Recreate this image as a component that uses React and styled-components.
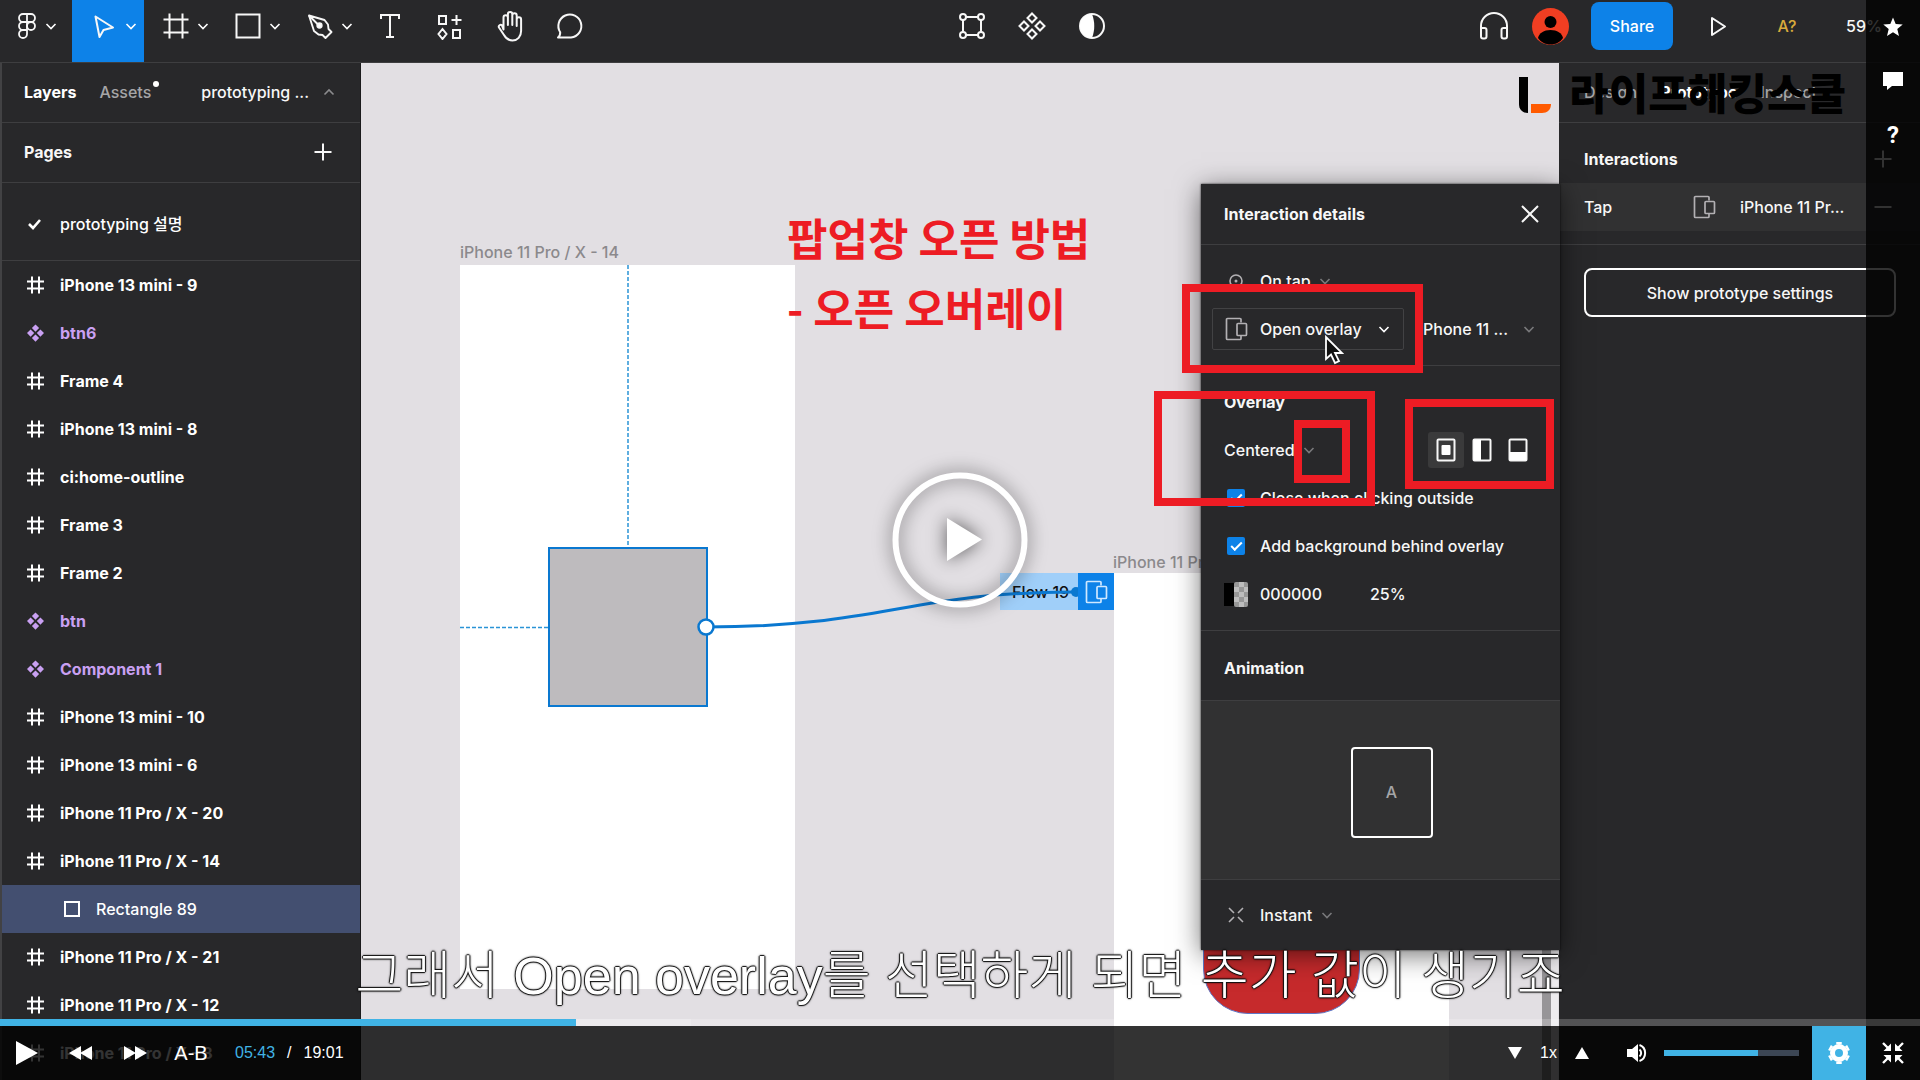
import React from "react";
import styled, { createGlobalStyle, css } from "styled-components";

const c = {
  panel: "#28282a",
  raised: "#313132",
  line: "#3e3e40",
  canvas: "#e2dfe3",
  blue: "#0d82e8",
  wire: "#0a78d0",
  sky: "#40b3e5",
  purple: "#c9a0f2",
  red: "#ed1c24",
  text: "#f7f7f7",
  dim: "#a5a5a7",
};

const Global = createGlobalStyle`
  *, *::before, *::after { box-sizing: border-box; }
  body { margin: 0; background: #000; }
  button, select, input { font: inherit; color: inherit; margin: 0; }
  button { padding: 0; border: 0; background: none; cursor: pointer; }
  svg { display: block; flex: none; }
  ul, h2, h3, p { margin: 0; padding: 0; font-size: inherit; list-style: none; }
`;

/* ---------- player shell ---------- */
const Player = styled.main`
  display: grid;
  grid-template: minmax(0, 1fr) / minmax(0, 1fr);
  height: 100vh;
  overflow: hidden;
  font-family: Inter, "Noto Sans CJK KR", sans-serif;
  font-size: 16px;
  font-weight: 500;
  line-height: 24px;
  color: ${c.text};
  & > * { grid-area: 1 / 1; }
`;

const Screen = styled.div`
  display: flex;
  flex-direction: column;
  min-height: 0;
  background: ${c.panel};
`;

/* ---------- toolbar ---------- */
const Toolbar = styled.header`
  display: flex;
  flex: none;
  height: 63px;
  border-bottom: 1px solid ${c.line};
`;
const ToolGroup = styled.div`
  display: flex;
  justify-content: center;
  flex: ${(p) => (p.$grow ? 1 : "none")};
`;
const Tool = styled.button`
  display: flex;
  align-items: center;
  justify-content: ${(p) => (p.$menu ? "flex-start" : "center")};
  gap: ${(p) => (p.$tight ? 4 : 7)}px;
  width: ${(p) => (p.$menu ? 72 : 60)}px;
  padding: 0 0 10px ${(p) => (p.$menu ? (p.$tight ? 13 : 18) : 0)}px;
  background: ${(p) => (p.$active ? c.blue : "transparent")};
`;
const Account = styled.div`
  display: grid;
  grid-template-columns: 60px 52px 112px 60px 78px 94px;
  place-items: center;
  padding-bottom: 10px;
`;
const Share = styled.button`
  width: 82px;
  height: 48px;
  border-radius: 8px;
  background: ${c.blue};
  color: #fff;
`;
const Missing = styled.button`
  color: #d8ab3c;
`;
const ZoomLevel = styled.button`
  justify-self: start;
  margin-left: 20px;
`;

/* ---------- layout under the toolbar ---------- */
const Body = styled.div`
  position: relative;
  display: flex;
  flex: 1;
  min-height: 0;
`;
const Side = styled.aside`
  flex: none;
  width: 361px;
  overflow: hidden;
  background: ${c.panel};
  ${(p) => p.$left && css`border-left: 2px solid #424244; border-right: 1px solid #1b1b1c;`}
`;
const Bar = styled.div`
  display: flex;
  align-items: center;
  gap: ${(p) => p.$gap || 23}px;
  height: 60px;
  padding: 0 25px 2px ${(p) => (p.$right ? 25 : 22)}px;
  border-bottom: 1px solid ${c.line};
`;
const Tab = styled.button`
  position: relative;
  color: ${(p) => (p.$on ? "#fff" : c.dim)};
  font-weight: ${(p) => (p.$on ? 700 : 500)};
`;
const Dot = styled.span`
  position: absolute;
  top: 1px;
  right: -8px;
  width: 6px;
  height: 6px;
  border-radius: 50%;
  background: #fff;
`;
const PageSwitch = styled.button`
  display: flex;
  align-items: center;
  gap: 14px;
  margin-left: auto;
`;
const Heading = styled.h2`
  flex: 1;
  font-weight: 700;
`;
const Pages = styled.ul`
  padding: 17px 0 12px;
  border-bottom: 1px solid ${c.line};
`;
const Row = styled.li`
  display: flex;
  align-items: center;
  gap: 14px;
  height: 48px;
  padding-left: ${(p) => (p.$nested ? 58 : 22)}px;
  background: ${(p) => (p.$selected ? "#434f70" : "transparent")};
  color: ${(p) => (p.$component ? c.purple : "#fff")};
  font-weight: ${(p) => (p.$plain ? 500 : 700)};
`;

/* ---------- canvas ---------- */
const Canvas = styled.section`
  position: relative;
  flex: 1;
  min-width: 0;
  overflow: hidden;
  background: ${c.canvas};
`;
const place = css`
  position: absolute;
  left: ${(p) => p.$x}px;
  top: ${(p) => p.$y}px;
  width: ${(p) => (p.$w ? p.$w + "px" : "auto")};
  height: ${(p) => (p.$h ? p.$h + "px" : "auto")};
`;
const Artboard = styled.div`${place} background: #fff;`;
const ArtLabel = styled.span`${place} color: #8b898c; white-space: nowrap;`;
const Shape = styled.div`${place} background: #bebbbe; border: 2px solid ${c.wire};`;
const RedPill = styled.div`
  ${place}
  background: #c62a2c;
  border: 1px solid #5f78c8;
  border-radius: 45px;
`;
const FlowTag = styled.div`
  ${place}
  display: flex;
  align-items: center;
  padding-left: 12px;
  background: #a0cff9;
  color: #111;
`;
const FlowTarget = styled.div`
  ${place}
  display: grid;
  place-items: center;
  background: ${c.blue};
`;
const Wires = styled.svg`
  position: absolute;
  inset: 0;
  width: 100%;
  height: 100%;
`;
const ScrollTrack = styled.div`
  position: absolute;
  top: 85%;
  bottom: 0;
  right: 1px;
  width: 16px;
  border-left: 9px solid #979598;
  background: #eeecef;
`;

/* ---------- interaction dialog ---------- */
const Dialog = styled.section`
  position: absolute;
  top: 121px;
  right: 360px;
  width: 359px;
  background: ${c.panel};
  box-shadow: 0 5px 25px rgba(0, 0, 0, 0.55), 0 0 2px rgba(0, 0, 0, 0.8);
`;
const DialogHead = styled.header`
  display: flex;
  align-items: center;
  height: 61px;
  padding: 0 20px 0 23px;
  border-bottom: 1px solid ${c.line};
`;
const Section = styled.div`
  padding: 12px 0;
  border-bottom: 1px solid ${c.line};
`;
const Line = styled.div`
  display: flex;
  align-items: center;
  height: 48px;
  padding: 0 20px 0 23px;
  gap: 12px;
`;
const IconSlot = styled.span`
  display: grid;
  place-items: center;
  flex: none;
  width: 24px;
  height: 24px;
`;
const Drop = styled.label`
  display: flex;
  align-items: center;
  gap: ${(p) => p.$gap || 8}px;
`;
const Select = styled.select`
  appearance: none;
  border: 0;
  padding: 0;
  background: transparent;
  color: ${c.text};
  outline: 0;
`;
const ActionRow = styled(Line)`
  padding: 0 25px 0 11px;
  justify-content: space-between;
`;
const ActionBox = styled.div`
  display: flex;
  align-items: center;
  gap: 12px;
  width: 192px;
  height: 42px;
  padding-left: 11px;
  border: 1px solid #424244;
  border-radius: 2px;
`;
const AlignGroup = styled.div`
  display: flex;
  margin-left: auto;
  padding-right: 4px;
`;
const AlignButton = styled.button`
  display: grid;
  place-items: center;
  width: 36px;
  height: 36px;
  border-radius: 3px;
  background: ${(p) => (p.$on ? "#3a3a3b" : "transparent")};
`;
const CheckLine = styled.label`
  display: flex;
  align-items: center;
  gap: 15px;
  height: 48px;
  padding-left: 26px;
`;
const Check = styled.input`
  appearance: none;
  display: grid;
  place-items: center;
  width: 18px;
  height: 18px;
  border-radius: 2px;
  background: ${c.blue};
  &:checked::after {
    content: "";
    width: 11px;
    height: 6px;
    border: solid #fff;
    border-width: 0 0 2px 2px;
    transform: translateY(-1px) rotate(-45deg);
  }
`;
const Swatch = styled.span`
  display: flex;
  width: 24px;
  height: 25px;
  align-items: center;
  &::before {
    content: "";
    width: 10px;
    height: 23px;
    background: #000;
  }
  &::after {
    content: "";
    width: 14px;
    height: 25px;
    border-radius: 2px;
    background: repeating-conic-gradient(#bdbdbd 0 25%, #979797 0 50%) 0 0 / 10px 10px;
  }
`;
const ValueInput = styled.input`
  width: ${(p) => p.$w}px;
  padding: 0;
  border: 0;
  background: transparent;
  outline: 0;
`;
const AnimTitle = styled.h3`
  height: 70px;
  padding: 0 23px;
  border-bottom: 1px solid ${c.line};
  font-weight: 700;
  line-height: 74px;
`;
const Preview = styled.div`
  display: grid;
  place-items: center;
  height: 179px;
  padding: 4px 0 0 22px;
  background: ${c.raised};
  border-bottom: 1px solid ${c.line};
`;
const PreviewCard = styled.div`
  display: grid;
  place-items: center;
  width: 82px;
  height: 91px;
  border: 2px solid #fff;
  border-radius: 4px;
  color: ${c.dim};
`;
const InstantLine = styled(Line)`
  height: 70px;
`;

/* ---------- prototype panel ---------- */
const ProtoSection = styled.div`
  padding: 12px 0 13px;
  border-bottom: 1px solid ${c.line};
`;
const ProtoRow = styled.div`
  display: flex;
  align-items: center;
  height: 48px;
  padding: 0 25px;
  background: ${(p) => (p.$lit ? c.raised : "transparent")};
`;
const Trigger = styled.span`
  width: 108px;
`;
const Target = styled.span`
  flex: 1;
  padding-left: 24px;
`;
const Settings = styled.button`
  display: block;
  width: calc(100% - 49px);
  height: 49px;
  margin: 23px 24px 0 25px;
  border: 2px solid #fff;
  border-radius: 8px;
`;

/* ---------- video overlays ---------- */
const Marks = styled.div`
  position: relative;
  pointer-events: none;
`;
const Frame = styled.div`${place} border: 8px solid ${c.red};`;
const Note = styled.p`
  ${place}
  color: ${c.red};
  font: 700 44px/70px "Noto Sans CJK KR", sans-serif;
  white-space: pre-line;
`;
const Pointer = styled.svg`${place}`;
const Watermark = styled.div`
  position: absolute;
  top: 61px;
  right: 74px;
  display: flex;
  align-items: center;
  gap: 18px;
  color: #000;
  font: 900 43px/60px "Noto Sans CJK KR", sans-serif;
`;
const Chrome = styled.div`
  display: grid;
  grid-template: minmax(0, 1fr) 7px 54px / minmax(0, 1fr) 54px;
  z-index: 2;
`;
const Stage = styled.div`
  position: relative;
  display: grid;
  grid-area: 1 / 1 / 2 / 3;
  place-items: end center;
`;
const BigPlay = styled.button`
  position: absolute;
  left: 50%;
  top: 50vh;
  transform: translate(-50%, -50%);
  display: grid;
  filter: drop-shadow(0 0 9px rgba(0, 0, 0, 0.6));
`;
const Caption = styled.p`
  padding-bottom: 9px;
  color: #fff;
  font: 300 52px/68px "Liberation Sans", "Noto Sans CJK KR", sans-serif;
  white-space: nowrap;
  text-shadow: 1px 0 1px #111, -1px 0 1px #111, 0 1px 1px #111, 0 -1px 1px #111,
    0 0 3px rgba(0, 0, 0, 0.7);
`;
const Rail = styled.nav`
  grid-area: 1 / 2 / 3 / 3;
  display: flex;
  flex-direction: column;
  background: rgba(0, 0, 0, 0.8);
  z-index: 1;
`;
const RailButton = styled.button`
  display: grid;
  place-items: center;
  height: 54px;
  color: #fff;
  font: 700 24px/28px Roboto, sans-serif;
`;
const Range = styled.input`
  appearance: none;
  display: block;
  width: 100%;
  height: ${(p) => p.$h}px;
  background: ${(p) => p.$fill};
  &::-webkit-slider-thumb { appearance: none; width: 0; height: 0; }
`;
const Seek = styled.div`
  grid-area: 2 / 1 / 3 / 3;
  z-index: 2;
`;
const Controls = styled.div`
  grid-area: 3 / 1 / 4 / 3;
  display: flex;
  align-items: center;
  background: rgba(0, 0, 0, 0.8);
  color: #fff;
  font-family: "Liberation Sans", Arial, sans-serif;
`;
const Ctl = styled.button`
  display: grid;
  place-items: center;
  width: ${(p) => p.$w || 54}px;
  height: 54px;
  background: ${(p) => (p.$on ? c.sky : "transparent")};
  font-size: 20px;
`;
const Time = styled.div`
  display: flex;
  gap: 12px;
  padding-left: 15px;
`;
const Now = styled.span`
  color: ${c.sky};
`;
const Right = styled.div`
  display: flex;
  align-items: center;
  margin-left: auto;
`;
const Speed = styled.div`
  display: flex;
  align-items: center;
  margin-right: 8px;
`;
const Rate = styled.span`
  width: 27px;
  text-align: center;
`;
const VolumeBox = styled.div`
  width: 135px;
  margin: 0 13px 0 0;
`;

/* ---------- drawings ---------- */
const Svg = ({ w = 28, h = w, box = `0 0 ${w} ${h}`, sw = 2, color = "currentColor", children, ...r }) => (
  <svg width={w} height={h} viewBox={box} fill="none" stroke={color} strokeWidth={sw} aria-hidden="true" {...r}>
    {children}
  </svg>
);
const Chev = ({ color = "#fff", up }) => (
  <Svg w={12} color={color} sw={1.6}>
    <path d={up ? "M1.500 8.500 6 4l4.500 4.500" : "M1.500 4 6 8.500 10.500 4"} />
  </Svg>
);
const Figma = () => (
  <Svg sw={1.8}>
    <path d="M14 2h-4a4 4 0 0 0 0 8h4zM14 2h4a4 4 0 0 1 0 8h-4zM14 10h-4a4 4 0 0 0 0 8h4zM14 18h-4a4 4 0 1 0 4 4z" />
    <circle cx="18" cy="14" r="4" />
  </Svg>
);
const Move = () => (
  <Svg sw={2}><path d="M5.500 4.500 23 15.500l-9.500 2.500-4 7z" strokeLinejoin="round" /></Svg>
);
const Hash = () => (
  <Svg><path d="M7.500 1.500v25M20.500 1.500v25M1.500 7.500h25M1.500 20.500h25" /></Svg>
);
const SmallHash = () => (
  <Svg w={22} sw={2}><path d="M8 2.500v17M15 2.500v17M3 7.500h17M3 14.500h17" /></Svg>
);
const Diamonds = () => (
  <Svg w={22} color="none"><path fill={c.purple} d="m11.500 2.500 3.600 3.600-3.600 3.600-3.600-3.600zm0 10 3.600 3.600-3.600 3.600-3.600-3.600zM6.600 7.500l3.600 3.600-3.600 3.600-3.600-3.600zm9.800 0 3.600 3.600-3.600 3.600-3.600-3.600z" /></Svg>
);
const Pen = () => (
  <Svg sw={1.9} strokeLinejoin="round">
    <path d="M3 3.500 8 19l4.500 3.500 4 0.500 3 3 6-6-3-3-.5-4.500L18.500 8z" />
    <path d="m3 3.500 9 9" /><circle cx="13.500" cy="13.500" r="2.200" fill="#fff" />
  </Svg>
);
const TextTool = () => (
  <Svg><path d="M5 7V3h18v4M14 3v22M10 25h8" /></Svg>
);
const Resources = () => (
  <Svg w={30} h={28}><path d="M4 4h7v8H4zM18 18h7v8h-7zM7.500 17l4 5-4 5-4-5zM21.500 3v10M16.500 8h10" /></Svg>
);
const Hand = () => (
  <Svg w={32} sw={2} strokeLinejoin="round" strokeLinecap="round">
    <path d="M9.500 19.500V7.500a2.200 2.200 0 0 1 4.400 0V15 4.200a2.200 2.200 0 0 1 4.400 0V15 5.500a2.200 2.200 0 0 1 4.400 0V16 9.500a2.200 2.200 0 0 1 4.400 0V21c0 5.500-3.600 9.500-8.600 9.500-4.500 0-6.500-2-8.500-5.500l-5-7.500c-1-1.800 1.500-3.600 3-2.200z" />
  </Svg>
);
const Comment = () => (
  <Svg w={30} h={28}><path d="M3 25.500c2-1.500 2.300-3.200 2.200-5.200A11.500 11.500 0 1 1 16 25.500z" strokeLinejoin="round" /></Svg>
);
const EditObject = () => (
  <Svg><path d="M8 5h12M8 23h12M5 8v12M23 8v12" /><circle cx="5" cy="5" r="3" /><circle cx="23" cy="5" r="3" /><circle cx="5" cy="23" r="3" /><circle cx="23" cy="23" r="3" /></Svg>
);
const Component = () => (
  <Svg><path d="m14 1.500 4.500 4.500-4.500 4.500L9.500 6zM14 17.500l4.500 4.500-4.500 4.500L9.500 22zM6 9.500l4.500 4.500L6 18.500 1.500 14zM22 9.500l4.500 4.500-4.500 4.500-4.500-4.500z" /></Svg>
);
const Mask = () => (
  <Svg><circle cx="14" cy="14" r="12" /><path fill="#fff" d="M14 2a12 12 0 0 0 0 24c3-8 3-16 0-24z" stroke="none" /></Svg>
);
const Headphones = () => (
  <Svg w={32}><path d="M3 25V16a13 13 0 0 1 26 0v9M3 18h3.500a2 2 0 0 1 2 2v6.500a2 2 0 0 1-2 2H5a2 2 0 0 1-2-2zM29 18h-3.500a2 2 0 0 0-2 2v6.500a2 2 0 0 0 2 2H27a2 2 0 0 0 2-2z" /></Svg>
);
const Avatar = () => (
  <Svg w={37} color="none"><circle cx="18.500" cy="18.500" r="18.500" fill="#f03e22" /><circle cx="18.500" cy="14" r="6" fill="#000" /><path fill="#000" d="M6 30c1-5 6-8 12.500-8S30 25 31 30c-3 4.500-8 6.500-12.500 6.500S9 34.500 6 30z" /></Svg>
);
const PlayOutline = () => (
  <Svg w={24}><path d="M6 4v17l13-8.500z" strokeLinejoin="round" /></Svg>
);
const OverlayIcon = ({ color = "#b2b0b3" }) => (
  <Svg w={24} sw={1.7} color={color}><path d="M17 5.500V2.500a1 1 0 0 0-1-1H3.500a1 1 0 0 0-1 1v19a1 1 0 0 0 1 1H16a1 1 0 0 0 1-1v-2.500" /><rect x="13" y="6.500" width="9.500" height="12" rx="1" /></Svg>
);
const Plus = () => <Svg w={24}><path d="M12 3.500v17M3.500 12h17" /></Svg>;
const Minus = () => <Svg w={24}><path d="M3.500 12h17" /></Svg>;
const Close = () => <Svg w={20}><path d="m2 2 16 16M18 2 2 18" /></Svg>;
const Tick = () => <Svg w={22} sw={2.6}><path d="m5 11 4 4 7-8" /></Svg>;
const SquareIcon = () => <Svg w={22}><path d="M5 4h14v14H5z" /></Svg>;
const TapIcon = () => <Svg w={16} sw={1.6} color="#b2b0b3"><circle cx="8" cy="8" r="6" /><circle cx="8" cy="8" r="1.500" fill="#b2b0b3" stroke="none" /></Svg>;
const InstantIcon = () => <Svg w={16} sw={1.6} color="#b2b0b3"><path d="m1 1 5 5M15 1l-5 5M1 15l5-5M15 15l-5-5" /></Svg>;
const AlignIcon = ({ kind }) => (
  <Svg w={20} h={24}>
    <rect x="1.500" y="1.500" width="17" height="21" rx="1" />
    {kind === "center" && <rect x="5.500" y="7" width="9" height="10" rx="1" fill="#fff" stroke="none" />}
    {kind === "left" && <path d="M2 2h7v20H2z" fill="#fff" stroke="none" />}
    {kind === "bottom" && <path d="M2 14h16v8H2z" fill="#fff" stroke="none" />}
  </Svg>
);
const Solid = ({ w, h = w, d }) => <Svg w={w} h={h} color="none"><path fill="#fff" d={d} /></Svg>;

const layers = [
  ["iPhone 13 mini - 9"], ["btn6", "component"], ["Frame 4"], ["iPhone 13 mini - 8"],
  ["ci:home-outline"], ["Frame 3"], ["Frame 2"], ["btn", "component"], ["Component 1", "component"],
  ["iPhone 13 mini - 10"], ["iPhone 13 mini - 6"], ["iPhone 11 Pro / X - 20"],
  ["iPhone 11 Pro / X - 14"], ["Rectangle 89", "rect"], ["iPhone 11 Pro / X - 21"],
  ["iPhone 11 Pro / X - 12"], ["iPhone 11 Pro / X - 8"],
];

const Dropdown = ({ label, value, gap, bright }) => (
  <Drop $gap={gap}>
    <Select aria-label={label} defaultValue={value}><option>{value}</option></Select>
    <Chev color={bright ? "#fff" : "#79797b"} />
  </Drop>
);

const LayerIcon = ({ kind }) =>
  kind === "component" ? <Diamonds /> : kind === "rect" ? <SquareIcon /> : <SmallHash />;

const seekFill = `linear-gradient(90deg, ${c.sky} 0 30%, rgba(255,255,255,.35) 30% 36%, rgba(255,255,255,.2) 36%)`;
const volumeFill = `linear-gradient(90deg, ${c.sky} 0 70%, #3c4654 70%)`;

export default function App() {
  return (
    <>
      <Global />
      <Player>
        <Screen>
          <Toolbar>
            <ToolGroup>
              <Tool $menu $tight aria-label="Main menu"><Figma /><Chev /></Tool>
              <Tool $menu $active aria-label="Move"><Move /><Chev /></Tool>
              <Tool $menu aria-label="Frame"><Hash /><Chev /></Tool>
              <Tool $menu aria-label="Rectangle"><Svg><path d="M2.500 2.500h23v23h-23z" /></Svg><Chev /></Tool>
              <Tool $menu aria-label="Pen"><Pen /><Chev /></Tool>
              <Tool aria-label="Text"><TextTool /></Tool>
              <Tool aria-label="Resources"><Resources /></Tool>
              <Tool aria-label="Hand"><Hand /></Tool>
              <Tool aria-label="Comment"><Comment /></Tool>
            </ToolGroup>
            <ToolGroup $grow>
              <Tool aria-label="Edit object"><EditObject /></Tool>
              <Tool aria-label="Create component"><Component /></Tool>
              <Tool aria-label="Use as mask"><Mask /></Tool>
            </ToolGroup>
            <Account>
              <button aria-label="Audio"><Headphones /></button>
              <Avatar />
              <Share>Share</Share>
              <button aria-label="Present"><PlayOutline /></button>
              <Missing>A?</Missing>
              <ZoomLevel>59%</ZoomLevel>
            </Account>
          </Toolbar>

          <Body>
            <Side $left>
              <Bar>
                <Tab $on>Layers</Tab>
                <Tab>Assets<Dot /></Tab>
                <PageSwitch>prototyping ...<Chev up color="#8b8b8d" /></PageSwitch>
              </Bar>
              <Bar>
                <Heading>Pages</Heading>
                <button aria-label="Add page"><Plus /></button>
              </Bar>
              <Pages>
                <Row $plain><Tick />prototyping 설명</Row>
              </Pages>
              <ul>
                {layers.map(([name, kind]) => (
                  <Row key={name} $component={kind === "component"} $nested={kind === "rect"} $selected={kind === "rect"} $plain={kind === "rect"}>
                    <LayerIcon kind={kind} />{name}
                  </Row>
                ))}
              </ul>
            </Side>

            <Canvas>
              <ArtLabel $x={99} $y={177}>iPhone 11 Pro / X - 14</ArtLabel>
              <Artboard $x={99} $y={202} $w={335} $h={724} />
              <ArtLabel $x={752} $y={487}>iPhone 11 Pro / X - 15</ArtLabel>
              <Artboard $x={753} $y={510} $w={335} $h={600} />
              <RedPill $x={842} $y={840} $w={157} $h={111} />
              <Shape $x={187} $y={484} $w={160} $h={160} />
              <FlowTag $x={639} $y={510} $w={78} $h={37}>Flow 19</FlowTag>
              <Wires>
                <path d="M267 202V484M99 564.500H187" stroke="#2a94d6" strokeDasharray="4 2" fill="none" strokeWidth="1.500" />
                <path d="M345 564C520 564 550 529 712 529" stroke={c.wire} strokeWidth="3" fill="none" />
                <circle cx="345" cy="564" r="7.500" fill="#fff" stroke={c.wire} strokeWidth="2.500" />
                <circle cx="715" cy="529" r="5" fill={c.wire} />
              </Wires>
              <FlowTarget $x={717} $y={510} $w={36} $h={37}><OverlayIcon color="#cfe8ff" /></FlowTarget>
              <ScrollTrack />
            </Canvas>

            <Side>
              <Bar $right $gap={23}>
                <Tab>Design</Tab>
                <Tab $on>Prototype</Tab>
                <Tab>Inspect</Tab>
              </Bar>
              <ProtoSection>
                <ProtoRow>
                  <Heading>Interactions</Heading>
                  <button aria-label="Add interaction"><Plus /></button>
                </ProtoRow>
                <ProtoRow $lit>
                  <Trigger>Tap</Trigger>
                  <OverlayIcon />
                  <Target>iPhone 11 Pr...</Target>
                  <button aria-label="Remove interaction"><Minus /></button>
                </ProtoRow>
              </ProtoSection>
              <Settings>Show prototype settings</Settings>
            </Side>

            <Dialog aria-label="Interaction details">
              <DialogHead>
                <Heading>Interaction details</Heading>
                <button aria-label="Close"><Close /></button>
              </DialogHead>
              <Section>
                <Line><IconSlot><TapIcon /></IconSlot><Dropdown label="Trigger" value="On tap" /></Line>
                <ActionRow>
                  <ActionBox><OverlayIcon /><Dropdown label="Action" value="Open overlay" gap={16} bright /></ActionBox>
                  <Dropdown label="Destination" value="iPhone 11 ..." gap={15} />
                </ActionRow>
              </Section>
              <Section>
                <Line><Heading as="h3">Overlay</Heading></Line>
                <Line>
                  <Dropdown label="Overlay position" value="Centered" />
                  <AlignGroup>
                    <AlignButton $on aria-label="Align center"><AlignIcon kind="center" /></AlignButton>
                    <AlignButton aria-label="Align left"><AlignIcon kind="left" /></AlignButton>
                    <AlignButton aria-label="Align bottom"><AlignIcon kind="bottom" /></AlignButton>
                  </AlignGroup>
                </Line>
                <CheckLine><Check type="checkbox" defaultChecked />Close when clicking outside</CheckLine>
                <CheckLine><Check type="checkbox" defaultChecked />Add background behind overlay</CheckLine>
                <Line>
                  <Swatch />
                  <ValueInput $w={98} aria-label="Overlay colour" defaultValue="000000" />
                  <ValueInput $w={60} aria-label="Overlay opacity" defaultValue="25%" />
                </Line>
              </Section>
              <AnimTitle>Animation</AnimTitle>
              <Preview><PreviewCard>A</PreviewCard></Preview>
              <InstantLine><IconSlot><InstantIcon /></IconSlot><Dropdown label="Animation" value="Instant" /></InstantLine>
            </Dialog>
          </Body>
        </Screen>

        <Marks>
          <Note $x={787} $y={202}>{"팝업창 오픈 방법\n- 오픈 오버레이"}</Note>
          <Pointer $x={1324} $y={335} $w={20} $h={31} viewBox="0 0 20 31" aria-hidden="true">
            <path d="M2 2v22l5-4.500 4 8.500 4-2-4-8h7z" fill="#111" stroke="#fff" strokeWidth="1.800" />
          </Pointer>
          <Frame $x={1182} $y={284} $w={241} $h={89} />
          <Frame $x={1154} $y={391} $w={221} $h={115} />
          <Frame $x={1294} $y={420} $w={56} $h={63} />
          <Frame $x={1405} $y={399} $w={149} $h={90} />
          <Watermark>
            <Svg w={32} h={44} box="0 -8 32 44" color="none">
              <path fill="#000" d="M0 0h9v36C3 36 0 32 0 27z" />
              <path fill="#ff5a00" d="M12 27h20c0 6-4 9-9 9H12z" />
            </Svg>
            라이프해킹스쿨
          </Watermark>
        </Marks>

        <Chrome>
          <Stage>
            <BigPlay aria-label="Play video">
              <Svg w={136} color="none">
                <circle cx="68" cy="68" r="64.500" stroke="#fff" strokeWidth="6" />
                <path d="M55 46v43l35-21.500z" fill="#fff" />
              </Svg>
            </BigPlay>
            <Caption>그래서 Open overlay를 선택하게 되면 추가 값이 생기죠</Caption>
          </Stage>
          <Rail>
            <RailButton aria-label="Favourite"><Solid w={20} d="m10 .5 2.700 6.500 7 .5-5.400 4.600 1.700 6.900-6-3.700-6 3.700 1.700-6.900L.3 7.500l7-.5z" /></RailButton>
            <RailButton aria-label="Comments"><Solid w={20} h={18} d="M0 0h20v14H9l-5 4v-4H0z" /></RailButton>
            <RailButton aria-label="Help">?</RailButton>
          </Rail>
          <Seek><Range type="range" aria-label="Seek" defaultValue="30" $h={7} $fill={seekFill} /></Seek>
          <Controls>
            <Ctl aria-label="Play"><Solid w={24} h={26} d="M1 1v24l22-12z" /></Ctl>
            <Ctl aria-label="Rewind"><Solid w={24} h={16} d="M12 1v14L0 8zM23 1v14L11 8z" /></Ctl>
            <Ctl aria-label="Fast forward"><Solid w={24} h={16} d="M1 1v14l12-7zM12 1v14l12-7z" /></Ctl>
            <Ctl $w={58}>A-B</Ctl>
            <Time><Now>05:43</Now><span>/</span><span>19:01</span></Time>
            <Right>
              <Speed>
                <Ctl $w={40} aria-label="Slower"><Solid w={14} h={12} d="M0 0h14L7 12z" /></Ctl>
                <Rate>1x</Rate>
                <Ctl $w={40} aria-label="Faster"><Solid w={14} h={12} d="M7 0l7 12H0z" /></Ctl>
              </Speed>
              <Ctl aria-label="Mute">
                <Svg w={20} sw={2}><path d="M0 6h5l6-5v18l-6-5H0z" fill="#fff" stroke="none" /><path d="M12.500 6.500a4.500 4.500 0 0 1 0 7M12.500 2a8.500 8.500 0 0 1 0 16" /></Svg>
              </Ctl>
              <VolumeBox><Range type="range" aria-label="Volume" defaultValue="70" $h={6} $fill={volumeFill} /></VolumeBox>
              <Ctl $on aria-label="Settings">
                <Svg w={24} color="#fff"><circle cx="12" cy="12" r="6.500" strokeWidth="5" /><path d="M12 3.500V1M12 23v-2.500M4.600 7.700 2.500 6.500M21.500 17.500l-2.100-1.200M4.600 16.300l-2.100 1.200M21.500 6.500l-2.100 1.200" strokeWidth="5.500" /></Svg>
              </Ctl>
              <Ctl aria-label="Exit full screen">
                <Svg w={22} color="#fff" sw={2.4}><path d="m1 1 6 6M21 1l-6 6M1 21l6-6M21 21l-6-6" /><path d="M9 1.500V9H1.500zM13 1.500V9h7.500zM9 20.500V13H1.500zM13 20.500V13h7.500z" fill="#fff" stroke="none" /></Svg>
              </Ctl>
            </Right>
          </Controls>
        </Chrome>
      </Player>
    </>
  );
}
